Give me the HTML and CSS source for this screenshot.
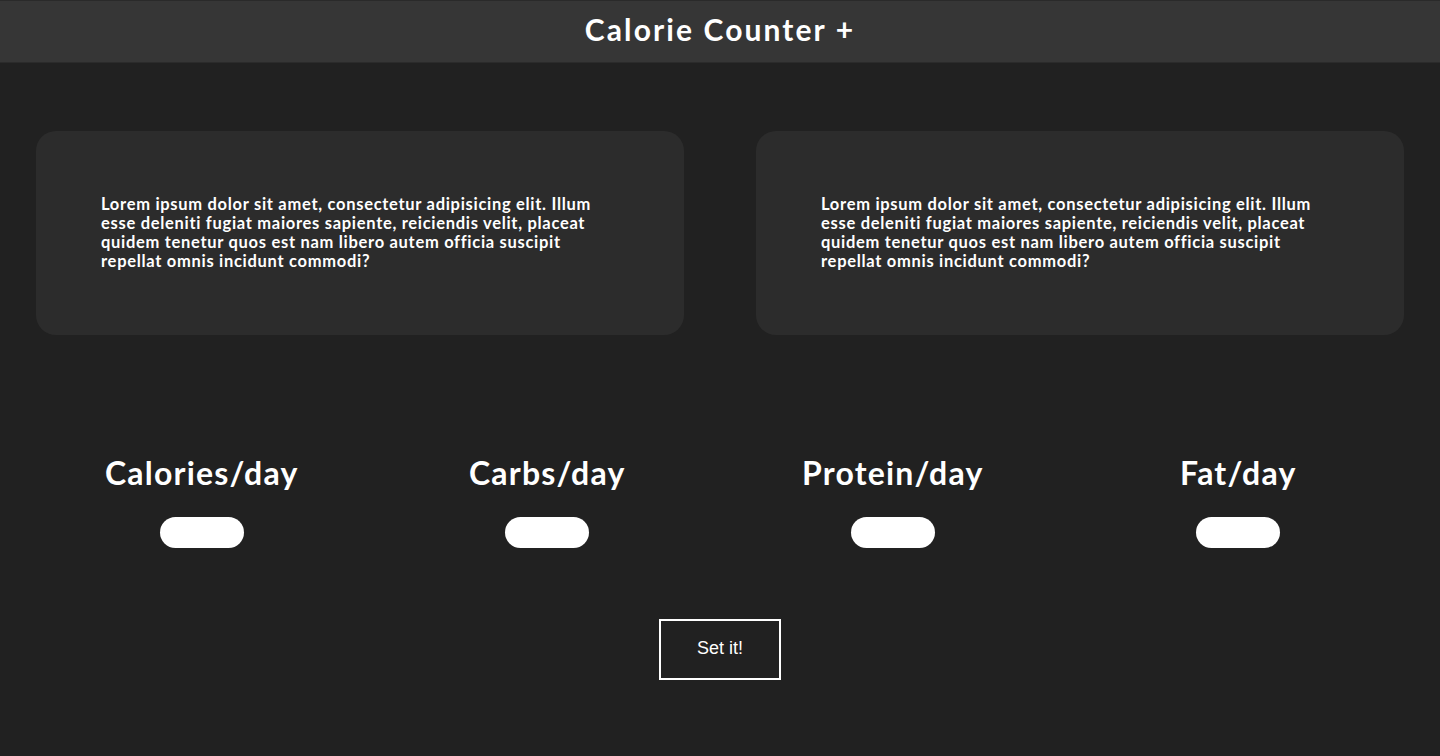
FILE: index.html
```html
<!DOCTYPE html>
<html lang="en">
<head>
<meta charset="utf-8">
<title>Calorie Counter +</title>
<link rel="stylesheet" href="styles.css">
</head>
<body>
<header class="topbar">
  <h1 class="title">Calorie Counter +</h1>
</header>
<main class="main">
  <section class="cards">
    <div class="card">
      <p class="card-text">Lorem ipsum dolor sit amet, consectetur adipisicing elit. Illum esse deleniti fugiat maiores sapiente, reiciendis velit, placeat quidem tenetur quos est nam libero autem officia suscipit repellat omnis incidunt commodi?</p>
    </div>
    <div class="card">
      <p class="card-text">Lorem ipsum dolor sit amet, consectetur adipisicing elit. Illum esse deleniti fugiat maiores sapiente, reiciendis velit, placeat quidem tenetur quos est nam libero autem officia suscipit repellat omnis incidunt commodi?</p>
    </div>
  </section>
  <section class="goals">
    <div class="goal">
      <h2 class="goal-title">Calories/day</h2>
      <input class="goal-input" type="text">
    </div>
    <div class="goal">
      <h2 class="goal-title">Carbs/day</h2>
      <input class="goal-input" type="text">
    </div>
    <div class="goal">
      <h2 class="goal-title">Protein/day</h2>
      <input class="goal-input" type="text">
    </div>
    <div class="goal">
      <h2 class="goal-title">Fat/day</h2>
      <input class="goal-input" type="text">
    </div>
  </section>
  <div class="actions">
    <button class="set-btn" type="button">Set it!</button>
  </div>
</main>
</body>
</html>
```
FILE: styles.css
```css
* { box-sizing: border-box; }
html, body { margin: 0; padding: 0; }
body {
  background: #212121;
  color: #ffffff;
  font-family: "Lato", "Noto Sans", sans-serif;
  height: 756px;
  overflow: hidden;
}
.topbar {
  height: 63px;
  background: #363636;
  border-top: 1px solid #2a2a2a;
  border-bottom: 1px solid #2b2b2b;
  display: flex;
  align-items: center;
  justify-content: center;
  padding-bottom: 5px;
}
.title {
  margin: 0;
  font-size: 30px;
  line-height: 36px;
  font-weight: 700;
  letter-spacing: 2.1px;
}
.cards {
  display: flex;
  justify-content: space-around;
  margin-top: 68px;
}
.card {
  width: 648px;
  height: 204px;
  background: #2c2c2c;
  border-radius: 20px;
  display: flex;
  align-items: center;
  padding: 0 65px;
}
.card-text {
  margin: 0;
  max-width: 505px;
  font-size: 16.5px;
  line-height: 19px;
  font-weight: 700;
  letter-spacing: 0.7px;
}
.goals {
  display: grid;
  grid-template-columns: repeat(4, 1fr);
  padding: 0 29px;
  margin-top: 118px;
}
.goal {
  display: flex;
  flex-direction: column;
  align-items: center;
}
.goal-title {
  margin: 0;
  font-size: 32px;
  line-height: 40px;
  font-weight: 700;
  letter-spacing: 1.2px;
}
.goal-input {
  margin-top: 24px;
  width: 84px;
  height: 31px;
  border: none;
  border-radius: 16px;
  background: #ffffff;
  outline: none;
}
.actions {
  display: flex;
  justify-content: center;
  margin-top: 71px;
}
.set-btn {
  width: 122px;
  height: 61px;
  background: transparent;
  border: 2px solid #ffffff;
  color: #ffffff;
  font-family: "Liberation Sans", Arial, sans-serif;
  font-size: 18px;
  padding: 0 0 2px;
}
```
